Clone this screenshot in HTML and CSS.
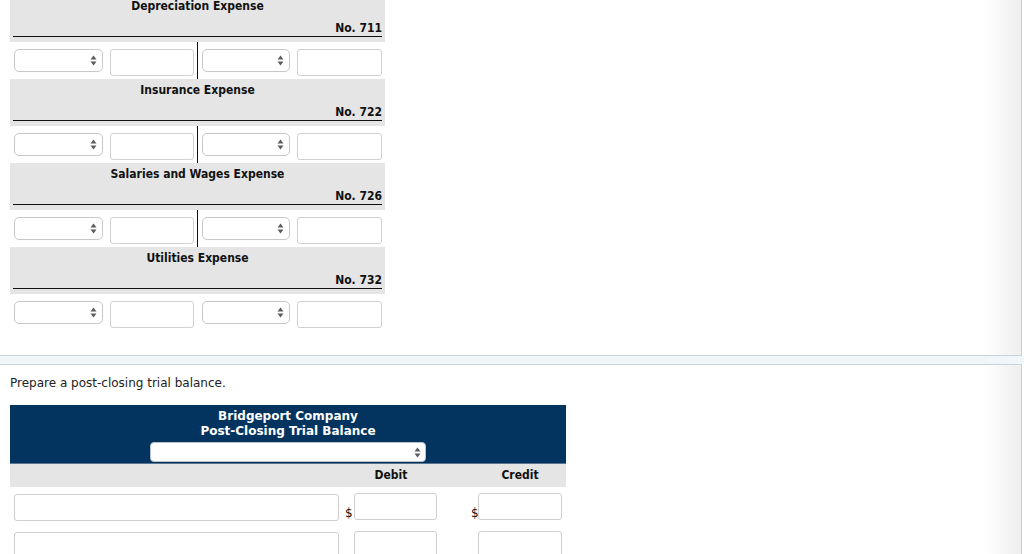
FILE: index.html
```html
<!DOCTYPE html>
<html>
<head>
<meta charset="utf-8">
<link rel="stylesheet" href="styles.css">
</head>
<body>
<div class="panel panel-top">
  <div class="ledgers">
    <div class="acct">
      <div class="acct-head"><div class="acct-title">Depreciation Expense</div><div class="acct-no">No. 711</div></div>
      <div class="acct-row">
        <div class="side side-l"><div class="sel"><svg class="arr" width="7" height="11" viewBox="0 0 7 11"><path d="M0.5 4.6 L3.5 0.5 L6.5 4.6Z"/><path d="M0.5 6.4 L3.5 10.5 L6.5 6.4Z"/></svg></div><div class="txt"></div></div>
        <div class="side side-r"><div class="sel"><svg class="arr" width="7" height="11" viewBox="0 0 7 11"><path d="M0.5 4.6 L3.5 0.5 L6.5 4.6Z"/><path d="M0.5 6.4 L3.5 10.5 L6.5 6.4Z"/></svg></div><div class="txt"></div></div>
      </div>
    </div>
    <div class="acct">
      <div class="acct-head"><div class="acct-title">Insurance Expense</div><div class="acct-no">No. 722</div></div>
      <div class="acct-row">
        <div class="side side-l"><div class="sel"><svg class="arr" width="7" height="11" viewBox="0 0 7 11"><path d="M0.5 4.6 L3.5 0.5 L6.5 4.6Z"/><path d="M0.5 6.4 L3.5 10.5 L6.5 6.4Z"/></svg></div><div class="txt"></div></div>
        <div class="side side-r"><div class="sel"><svg class="arr" width="7" height="11" viewBox="0 0 7 11"><path d="M0.5 4.6 L3.5 0.5 L6.5 4.6Z"/><path d="M0.5 6.4 L3.5 10.5 L6.5 6.4Z"/></svg></div><div class="txt"></div></div>
      </div>
    </div>
    <div class="acct">
      <div class="acct-head"><div class="acct-title">Salaries and Wages Expense</div><div class="acct-no">No. 726</div></div>
      <div class="acct-row">
        <div class="side side-l"><div class="sel"><svg class="arr" width="7" height="11" viewBox="0 0 7 11"><path d="M0.5 4.6 L3.5 0.5 L6.5 4.6Z"/><path d="M0.5 6.4 L3.5 10.5 L6.5 6.4Z"/></svg></div><div class="txt"></div></div>
        <div class="side side-r"><div class="sel"><svg class="arr" width="7" height="11" viewBox="0 0 7 11"><path d="M0.5 4.6 L3.5 0.5 L6.5 4.6Z"/><path d="M0.5 6.4 L3.5 10.5 L6.5 6.4Z"/></svg></div><div class="txt"></div></div>
      </div>
    </div>
    <div class="acct">
      <div class="acct-head"><div class="acct-title">Utilities Expense</div><div class="acct-no">No. 732</div></div>
      <div class="acct-row">
        <div class="side side-l side-open"><div class="sel"><svg class="arr" width="7" height="11" viewBox="0 0 7 11"><path d="M0.5 4.6 L3.5 0.5 L6.5 4.6Z"/><path d="M0.5 6.4 L3.5 10.5 L6.5 6.4Z"/></svg></div><div class="txt"></div></div>
        <div class="side side-r"><div class="sel"><svg class="arr" width="7" height="11" viewBox="0 0 7 11"><path d="M0.5 4.6 L3.5 0.5 L6.5 4.6Z"/><path d="M0.5 6.4 L3.5 10.5 L6.5 6.4Z"/></svg></div><div class="txt"></div></div>
      </div>
    </div>
  </div>
</div>
<div class="band"></div>
<div class="panel panel-bottom">
  <p class="prompt">Prepare a post-closing trial balance.</p>
  <div class="tb">
    <div class="tb-head">
      <div class="tb-line">Bridgeport Company</div>
      <div class="tb-line">Post-Closing Trial Balance</div>
      <div class="tb-sel"><svg class="arr" width="7" height="11" viewBox="0 0 7 11"><path d="M0.5 4.6 L3.5 0.5 L6.5 4.6Z"/><path d="M0.5 6.4 L3.5 10.5 L6.5 6.4Z"/></svg></div>
    </div>
    <div class="tb-cols">
      <div class="tb-col-acct"></div>
      <div class="tb-col-debit">Debit</div>
      <div class="tb-col-credit">Credit</div>
    </div>
    <div class="tb-row">
      <div class="tb-acct"></div>
      <span class="cur cur-debit">$</span><div class="tb-amt tb-debit"></div>
      <span class="cur cur-credit">$</span><div class="tb-amt tb-credit"></div>
    </div>
    <div class="tb-row">
      <div class="tb-acct"></div>
      <span class="cur cur-debit"></span><div class="tb-amt tb-debit"></div>
      <span class="cur cur-credit"></span><div class="tb-amt tb-credit"></div>
    </div>
  </div>
</div>
</body>
</html>
```
FILE: styles.css
```css
html, body {
  margin: 0;
  padding: 0;
  background: #ffffff;
}
body {
  font-family: "DejaVu Sans", Verdana, sans-serif;
  font-size: 12px;
  color: #222;
  width: 1024px;
  height: 554px;
  overflow: hidden;
}
.panel {
  width: 1021px;
  border-right: 1px solid #c9d0d7;
  background: linear-gradient(to right, #ffffff calc(100% - 36px), #eeeeee);
}
.panel-top {
  height: 355px;
  border-bottom: 1px solid #c9d2db;
  overflow: hidden;
}
.band {
  height: 8px;
  background: #f3f6f9;
}
.panel-bottom {
  height: 200px;
  border-top: 1px solid #c9d2db;
}
.ledgers {
  margin: -5px 0 0 10px;
  width: 375px;
}
.acct-head {
  background: #e5e5e5;
  padding: 3px 3px 5px;
  font-family: "DejaVu Sans Condensed", "DejaVu Sans", sans-serif;
  font-stretch: condensed;
  font-weight: bold;
  color: #111;
}
.acct-title {
  height: 16px;
  line-height: 16px;
  text-align: center;
}
.acct-no {
  margin-top: 6px;
  line-height: 16px;
  text-align: right;
  border-bottom: 1px solid #111;
}
.acct-row {
  display: flex;
  height: 37px;
}
.side {
  box-sizing: border-box;
  display: flex;
  align-items: flex-start;
  gap: 7px;
  padding-top: 7px;
}
.side-l {
  width: 188px;
  padding-left: 4px;
  border-right: 1px solid #111;
}
.side-l.side-open {
  border-right-color: transparent;
}
.side-r {
  width: 187px;
  padding-left: 4px;
}
.sel {
  box-sizing: border-box;
  width: 89px;
  height: 23px;
  border: 1px solid #c8c8c8;
  border-radius: 5px;
  background: #fff;
  display: flex;
  align-items: center;
  justify-content: flex-end;
  padding-right: 5px;
}
.side-r .sel {
  width: 88px;
}
.arr path {
  fill: #5c5c5c;
}
.txt {
  box-sizing: border-box;
  width: 84px;
  height: 27px;
  border: 1px solid #d0d0d0;
  border-radius: 3px;
  background: #fff;
}
.side-r .txt {
  width: 85px;
}
.prompt {
  margin: 10px 0 0 10px;
  line-height: 16px;
  color: #222;
}
.tb {
  margin: 14px 0 0 10px;
  width: 556px;
}
.tb-head {
  background: #03345f;
  color: #fff;
  padding: 4px 0 1px;
  text-align: center;
  font-family: "DejaVu Sans", sans-serif;
  font-weight: bold;
}
.tb-line {
  line-height: 15px;
}
.tb-sel {
  box-sizing: border-box;
  width: 276px;
  height: 20px;
  margin: 3px auto 0;
  background: #fff;
  border: 1px solid #b8c0c8;
  border-radius: 4px;
  display: flex;
  align-items: center;
  justify-content: flex-end;
  padding-right: 4px;
}
.tb-cols {
  display: flex;
  height: 24px;
  line-height: 23px;
  background: #e5e5e5;
  border-top: 1px solid #5a7590;
  box-sizing: border-box;
  font-family: "DejaVu Sans Condensed", "DejaVu Sans", sans-serif;
  font-stretch: condensed;
  font-weight: bold;
  color: #111;
}
.tb-col-acct {
  width: 333px;
}
.tb-col-debit {
  width: 96px;
  text-align: center;
}
.tb-col-credit {
  width: 92px;
  margin-left: 35px;
  text-align: center;
}
.tb-row {
  display: flex;
  align-items: flex-start;
  height: 38px;
  padding-top: 6px;
  box-sizing: border-box;
}
.tb-acct {
  box-sizing: border-box;
  width: 325px;
  height: 27px;
  margin: 1px 0 0 4px;
  border: 1px solid #cfcfcf;
  border-radius: 3px;
}
.cur {
  display: block;
  height: 27px;
  line-height: 14px;
  padding-top: 13px;
  box-sizing: border-box;
  color: #111;
}
.cur-debit {
  width: 9px;
  margin-left: 6px;
}
.cur-credit {
  width: 7px;
  margin-left: 34px;
}
.tb-amt {
  box-sizing: border-box;
  height: 27px;
  border: 1px solid #cfcfcf;
  border-radius: 3px;
}
.tb-debit {
  width: 83px;
}
.tb-credit {
  width: 84px;
}
```
